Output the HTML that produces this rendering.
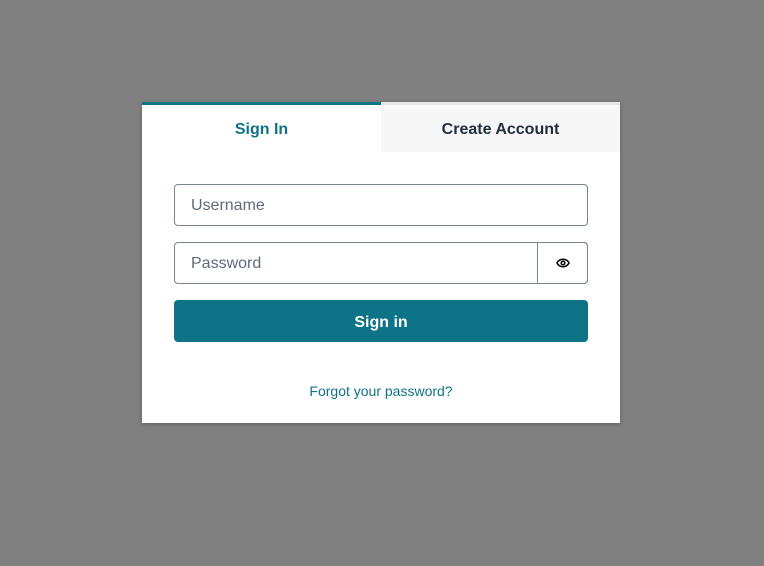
<!DOCTYPE html>
<html><head><style>
body{margin:0;width:764px;height:566px;background:#808080;font-family:"Liberation Sans",sans-serif;position:relative;overflow:hidden}
.card{position:absolute;left:142px;top:102px;width:478px;height:321px;background:#fff;box-shadow:0 1px 4px rgba(0,0,0,.25)}
.tab{position:absolute;top:0;height:47px;width:239px;text-align:center;line-height:50px;font-weight:bold;font-size:16px}
.t1{left:0;border-top:3px solid #0e7387;color:#0e7387;background:#fff}
.t2{left:239px;border-top:3px solid #e6e6e6;color:#232f3e;background:#f7f7f7;height:47px}
.in{position:absolute;left:32px;border:1px solid #768594;border-radius:4px;box-sizing:border-box;width:414px;height:42px;font-size:16px;color:#5f6b7a;line-height:42px;padding-left:16px}
.eye{position:absolute;left:395px;top:140px;width:51px;height:42px;box-sizing:border-box;border:1px solid #768594;border-radius:0 4px 4px 0}
.btn{position:absolute;left:32px;top:198px;width:414px;height:42px;background:#0e7387;border-radius:4px;color:#fff;font-weight:bold;font-size:16px;text-align:center;line-height:45px}
.link{position:absolute;left:0;width:478px;top:281px;text-align:center;color:#0e7387;font-size:14px}
</style></head><body>
<div class="card">
<div class="tab t1">Sign In</div>
<div class="tab t2">Create Account</div>
<div class="in" style="top:82px">Username</div>
<div class="in" style="top:140px">Password</div>
<div class="eye"><svg width="16" height="16" viewBox="0 0 16 16" style="position:absolute;left:17px;top:12px"><path d="M2 8C3.4 5.3 5.5 4.3 8 4.3s4.6 1 6 3.7C12.6 10.7 10.5 11.7 8 11.7S3.4 10.7 2 8z" fill="none" stroke="#000" stroke-width="1.5"/><circle cx="8" cy="8" r="1.8" fill="none" stroke="#000" stroke-width="1.5"/></svg></div>
<div class="btn">Sign in</div>
<div class="link">Forgot your password?</div>
</div>
</body></html>
